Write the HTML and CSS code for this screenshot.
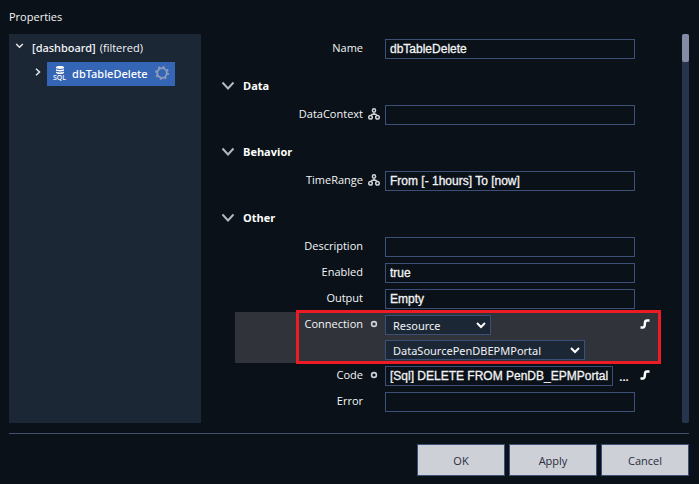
FILE: index.html
```html
<!DOCTYPE html>
<html lang="en">
<head>
<meta charset="utf-8">
<title>Properties</title>
<link rel="stylesheet" href="styles.css">
</head>
<body>
<svg class="defs" aria-hidden="true">
  <symbol id="chevron" viewBox="0 0 14 10"><path d="M1.500 1.500 7 7.500l5.500-6" fill="none" stroke="currentColor" stroke-width="2"/></symbol>
  <symbol id="tree" viewBox="0 0 12 12"><g fill="none" stroke="currentColor" stroke-width="1.500"><circle cx="6" cy="2.400" r="1.600"/><circle cx="2.500" cy="9.300" r="1.800"/><circle cx="9.500" cy="9.300" r="1.800"/><path d="M6 4.200v2M3 7.600 4.300 6.200h3.400l1.300 1.400"/></g></symbol>
  <symbol id="ring" viewBox="0 0 12 12"><circle cx="6" cy="6" r="2.400" fill="none" stroke="currentColor" stroke-width="1.600"/></symbol>
  <symbol id="flow" viewBox="0 0 10 10"><path d="M.5 8.500h2.300Q4.500 8.500 4.700 6.500L5 3.700Q5.200 1.500 7 1.500h2.500" fill="none" stroke="currentColor" stroke-width="2.500"/></symbol>
</svg>
<main class="dialog">
  <h1 class="title">Properties</h1>
  <div class="content">
    <nav class="sidebar">
      <div class="node root"><svg class="arrow down" viewBox="0 0 8 6"><path d="M.7 1 4 4.300 7.300 1"/></svg><span>[dashboard]</span><small>(filtered)</small></div>
      <div class="node child"><svg class="arrow" viewBox="0 0 6 8"><path d="M1 .7 4.500 4 1 7.300"/></svg>
        <a class="selected" href="#dbTableDelete">
          <span class="sql"><svg viewBox="0 0 8 8"><path d="M0 1.300C0-.3 8-.3 8 1.300V2C7 3.200 1 3.200 0 2ZM0 3c1 1.200 7 1.200 8 0v1.500c-1 1.200-7 1.200-8 0ZM0 5.500c1 1.200 7 1.200 8 0v1.300c0 1.600-8 1.600-8 0Z"/></svg>SQL</span>
          <span>dbTableDelete</span>
          <svg class="gear" viewBox="0 0 14 14"><circle cx="7" cy="7" r="4.800"/><circle class="teeth" cx="7" cy="7" r="6"/></svg>
        </a>
      </div>
    </nav>
    <form class="properties" id="properties">
      <div class="row"><label for="name">Name</label><input class="field" id="name" value="dbTableDelete"></div>
      <h2 class="group"><svg><use href="#chevron"/></svg>Data</h2>
      <div class="row"><label for="context">DataContext</label><svg class="kind"><use href="#tree"/></svg><input class="field" id="context"></div>
      <h2 class="group"><svg><use href="#chevron"/></svg>Behavior</h2>
      <div class="row"><label for="range">TimeRange</label><svg class="kind"><use href="#tree"/></svg><input class="field" id="range" value="From [- 1hours] To [now]"></div>
      <h2 class="group"><svg><use href="#chevron"/></svg>Other</h2>
      <div class="row"><label for="description">Description</label><input class="field" id="description"></div>
      <div class="row"><label for="enabled">Enabled</label><input class="field" id="enabled" value="true"></div>
      <div class="row"><label for="output">Output</label><input class="field" id="output" value="Empty"></div>
      <div class="row active"><label for="connection">Connection</label><svg class="kind"><use href="#ring"/></svg>
        <div class="field selects">
          <div class="select short"><select id="connection"><option>Resource</option></select><svg viewBox="0 0 10 7"><path d="m1 1 4 4 4-4"/></svg></div>
          <div class="select long"><select aria-label="Data source"><option>DataSourcePenDBEPMPortal</option></select><svg viewBox="0 0 10 7"><path d="m1 1 4 4 4-4"/></svg></div>
        </div>
        <svg class="flow"><use href="#flow"/></svg>
      </div>
      <div class="row"><label for="code">Code</label><svg class="kind"><use href="#ring"/></svg>
        <div class="field code"><input id="code" value="[Sql] DELETE FROM PenDB_EPMPortal"><button class="more" type="button">...</button></div>
        <svg class="flow"><use href="#flow"/></svg>
      </div>
      <div class="row"><label for="error">Error</label><input class="field" id="error"></div>
    </form>
    <div class="scrollbar"><div class="thumb"></div></div>
  </div>
  <footer class="actions">
    <button type="submit" form="properties">OK</button><button type="button">Apply</button><button type="button">Cancel</button>
  </footer>
</main>
</body>
</html>
```
FILE: styles.css
```css
* { box-sizing: border-box; }
body {
  margin: 0;
  background: #0a1118;
  color: #f4f5f7;
  font: 11px/16px "Open Sans", sans-serif;
}
svg { display: block; }
.defs { position: absolute; width: 0; height: 0; }
.dialog {
  display: flex;
  flex-direction: column;
  min-height: 100vh;
  padding: 9px 10px 8px 9px;
}
.title { margin: 0 0 9px; font-size: 11px; font-weight: 400; line-height: 16px; }
.content { display: flex; flex: 1; }

.sidebar { flex: 0 0 192px; background: #1c2736; padding-top: 4px; }
.node { display: flex; align-items: center; }
.root { gap: 4px; height: 20px; padding-left: 6px; }
.root span { margin-left: 4px; font: 500 11px/16px "Noto Sans", sans-serif; }
.root small { font-size: 11px; }
.arrow { width: 6px; height: 8px; fill: none; stroke: #e6e8ea; stroke-width: 1.5; }
.arrow.down { width: 9px; height: 6px; margin-bottom: 4px; }
.child { gap: 6px; margin-top: 4px; padding-left: 26px; }
.child .arrow { margin-bottom: 4px; }
.selected {
  display: flex;
  align-items: center;
  gap: 6px;
  width: 128px;
  height: 24px;
  padding: 0 6px;
  background: #3565b5;
  color: #fff;
  font: 500 11px/16px "Noto Sans", sans-serif;
  text-decoration: none;
}
.sql { font-size: 7px; line-height: 8px; }
.sql svg { width: 8px; height: 8px; margin: 0 auto; fill: #fff; }
.gear { flex: none; width: 14px; height: 14px; margin: 0 0 3px auto; fill: none; stroke: #8c9cbd; stroke-width: 1.8; overflow: visible; }
.teeth { stroke-width: 2; stroke-dasharray: 2 2.71; }

.properties { flex: 1; min-width: 0; padding: 2px 23px 8px 20px; }
.row {
  display: grid;
  grid-template-columns: 128px 22px minmax(0, 1fr) 24px;
  margin-left: 14px;
  padding: 3px 0;
}
.row label { grid-column: 1; padding-top: 1px; text-align: right; }
.kind { grid-column: 2; width: 12px; height: 12px; margin: 3px auto 0 5px; color: #d0d3d6; }
.field { grid-column: 3; }
.flow { grid-column: 4; width: 10px; height: 10px; margin: 4px 0 0 5px; color: #fff; }
input, select {
  width: 100%;
  height: 20px;
  border: 1px solid #3c5077;
  border-radius: 0;
  background: transparent;
  color: #f2f3f5;
  outline: none;
}
input { padding: 0 4px; font: 12px "Liberation Sans", sans-serif; -webkit-text-stroke: 0.3px; }
.group {
  display: flex;
  align-items: center;
  gap: 8px;
  height: 40px;
  margin: 0;
  padding-top: 8px;
  font-size: 11px;
  color: #fff;
}
.group svg { width: 14px; height: 10px; color: #b4b8bc; }
.active { position: relative; background: #303339; }
.active::after {
  content: "";
  position: absolute;
  inset: -2px -2px -1px 61px;
  border: 3px solid #ed1c24;
  pointer-events: none;
}
.selects { display: grid; gap: 5px; }
.select { position: relative; }
.short { width: 106px; }
.long { width: 200px; }
.select select { padding: 0 7px; background: #1c2736; font: 11px "Noto Sans", sans-serif; appearance: none; }
.select svg { position: absolute; right: 5px; top: 7px; width: 10px; height: 7px; fill: none; stroke: #fff; stroke-width: 2; pointer-events: none; }
.code { display: flex; }
.code input { flex: 1; min-width: 0; }
.more { width: 22px; height: 20px; padding: 0; border: 0; background: none; color: #fff; font: 700 11px "Open Sans", sans-serif; }
.scrollbar { width: 7px; border-radius: 2px; background: #27344d; }
.thumb { height: 28px; border-radius: 2px; background: #858da6; }

.actions {
  display: flex;
  justify-content: flex-end;
  gap: 4px;
  margin-top: 10px;
  padding-top: 10px;
  border-top: 1px solid #444f6b;
}
.actions button {
  width: 88px;
  height: 32px;
  border: 1px solid #3c5077;
  background: #cdd0d7;
  color: #292d3c;
  font: 500 11px "Open Sans", sans-serif;
}
```
